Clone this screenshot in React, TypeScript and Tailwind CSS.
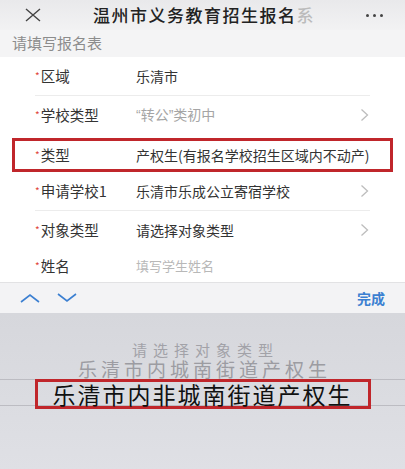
import React from 'react';

const font = { fontFamily: '"Noto Sans CJK SC", "Noto Sans", sans-serif' };

function Chevron() {
  return (
    <svg width="9" height="14" viewBox="0 0 9 14" className="shrink-0">
      <path d="M1.5 1.5 L7.5 7 L1.5 12.5" fill="none" stroke="#bdbdbd" strokeWidth="1.3" />
    </svg>
  );
}

function Label({ text }: { text: string }) {
  return (
    <div className="w-[101px] flex items-center text-[14.5px] text-[#333]">
      <span className="text-[#e0453a] text-[10px] mr-[1px] -mt-[2px]">*</span>
      {text}
    </div>
  );
}

function Row({
  label,
  value,
  muted,
  arrow,
  sep,
}: {
  label: string;
  value: React.ReactNode;
  muted?: boolean;
  arrow?: boolean;
  sep?: boolean;
}) {
  return (
    <div
      className="mx-[35px] h-[39px] flex items-center border-b"
      style={{ borderColor: sep ? '#ececec' : 'transparent' }}
    >
      <Label text={label} />
      <div className={`flex-1 text-[14px] ${muted ? 'text-[#a5a5a5]' : 'text-[#333]'}`}>{value}</div>
      {arrow && <div className="pr-[1px]"><Chevron /></div>}
    </div>
  );
}

const latin = { fontFamily: '"Liberation Sans", sans-serif' };

export default function App() {
  return (
    <div className="w-[405px] h-[469px] overflow-hidden flex flex-col bg-white" style={font}>
      {/* Nav bar */}
      <div className="h-[30px] flex items-center bg-gradient-to-b from-[#e9e9eb] to-[#f2f2f3] pl-[24px] pr-[22px]">
        <svg width="18" height="14" viewBox="0 0 18 14">
          <path d="M2 1 L16 13 M16 1 L2 13" stroke="#444" strokeWidth="1.4" fill="none" />
        </svg>
        <div className="flex-1 text-center text-[17px] font-medium text-[#222] tracking-[1.5px]">
          温州市义务教育招生报名<span className="text-[#bbb]">系</span>
        </div>
        <div className="flex items-center gap-[4px]">
          <div className="w-[3px] h-[3px] rounded-full bg-[#444]" />
          <div className="w-[3px] h-[3px] rounded-full bg-[#444]" />
          <div className="w-[3px] h-[3px] rounded-full bg-[#444]" />
        </div>
      </div>

      {/* Sub header */}
      <div className="h-[27px] flex items-center bg-[#f4f4f5] px-[12px] text-[15px] text-[#8c8c8c]">
        请填写报名表
      </div>

      {/* Form */}
      <div className="flex-1 bg-white flex flex-col">
        <Row label="区域" value="乐清市" sep />
        <Row
          label="学校类型"
          value={
            <>
              <span style={latin}>“</span>转公<span style={latin}>”</span>类初中
            </>
          }
          muted
          arrow
        />
        <div className="mx-[12px] mt-[3px] h-[34px] border-[3px] border-[#c0262b] flex items-center pl-[20px]">
          <Label text="类型" />
          <div className="flex-1 text-[14px] text-[#333] whitespace-nowrap">产权生(有报名学校招生区域内不动产)</div>
        </div>
        <Row label="申请学校1" value="乐清市乐成公立寄宿学校" arrow sep />
        <Row label="对象类型" value="请选择对象类型" arrow />
        <div className="mx-[35px] h-[32px] flex items-center">
          <Label text="姓名" />
          <div className="flex-1 text-[13px] text-[#b8b8b8]">填写学生姓名</div>
        </div>
      </div>

      {/* Toolbar */}
      <div className="h-[31px] shrink-0 bg-[#f3f3f5] border-t border-[#e2e2e4] flex items-center px-[20px]">
        <svg width="20" height="10" viewBox="0 0 20 10">
          <path d="M1 9 L10 2 L19 9" stroke="#3b7fd1" strokeWidth="1.6" fill="none" />
        </svg>
        <svg width="20" height="10" viewBox="0 0 20 10" className="ml-[17px]">
          <path d="M1 1 L10 8 L19 1" stroke="#3b7fd1" strokeWidth="1.6" fill="none" />
        </svg>
        <div className="flex-1" />
        <div className="text-[14px] font-bold text-[#3b7fd1]">完成</div>
      </div>

      {/* Picker */}
      <div className="h-[156px] shrink-0 bg-gradient-to-b from-[#d6d7dc] to-[#dfe0e5] flex flex-col items-center pt-[27px]">
        <div className="h-[18px] flex items-center text-[15px] text-[#a2a2a8] tracking-[6px] pl-[6px] leading-none">
          请选择对象类型
        </div>
        <div className="h-[21px] flex items-center text-[19px] text-[#9c9ca2] tracking-[4px] pl-[4px] leading-none">
          乐清市内城南街道产权生
        </div>
        <div className="w-full h-[27px] border-y border-[#bcbcc2] flex justify-center">
          <div className="w-[336px] -mt-[1px] h-[30px] border-[3px] border-[#c0262b] flex items-center justify-center text-[23px] text-[#111] tracking-[2px] leading-none">
            乐清市内非城南街道产权生
          </div>
        </div>
      </div>
    </div>
  );
}
